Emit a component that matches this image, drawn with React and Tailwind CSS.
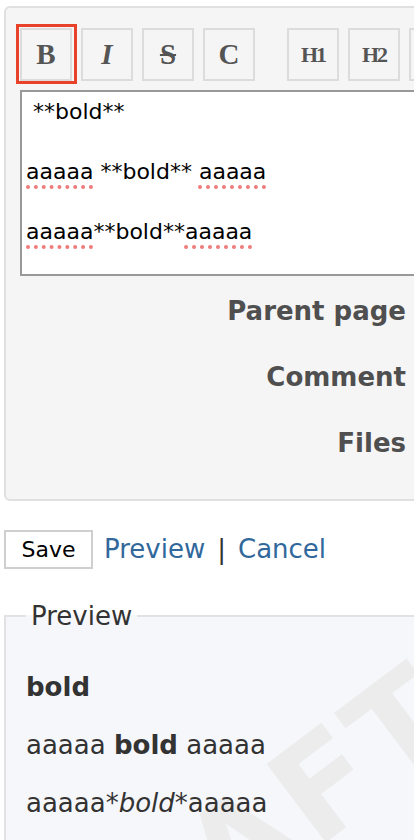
import React from "react";

const Sq = ({ children }) => (
  <span className="underline decoration-dotted decoration-[#ef7b7b] decoration-[4px] underline-offset-[6px]">
    {children}
  </span>
);

const TB = ({ children, className = "" }) => (
  <div
    className={
      "w-[52px] h-[53px] shrink-0 border-2 border-[#dcdcdc] bg-[#f5f5f5] flex items-center justify-center text-[#555] font-['Liberation_Serif',serif] font-bold " +
      className
    }
  >
    {children}
  </div>
);

export default function App() {
  return (
    <div className="relative w-[414px] h-[840px] overflow-hidden bg-white font-['DejaVu_Sans',sans-serif] text-[#222]">
      {/* editor box */}
      <div className="ml-[4px] mt-[6px] w-[700px] h-[495px] border-2 border-[#e0e0e0] rounded-[6px] bg-[#f5f5f5] pl-[14px] pt-[20px]">
        <div className="flex items-start">
          <div className="relative">
            <TB className="text-[29px]">B</TB>
            <div className="absolute left-[-4px] top-[-4px] w-[61px] h-[60px] border-[3px] border-[#e8432a]" />
          </div>
          <TB className="ml-[9px] italic text-[29px]">I</TB>
          <TB className="ml-[9px] line-through decoration-2 text-[29px]">S</TB>
          <TB className="ml-[9px] text-[29px]">C</TB>
          <TB className="ml-[32px] text-[22px] tracking-[-2px]">H1</TB>
          <TB className="ml-[9px] text-[22px] tracking-[-2px]">H2</TB>
          <TB className="ml-[9px] text-[22px] tracking-[-2px]">H3</TB>
        </div>
        <div className="mt-[9px] w-[600px] h-[186px] border-2 border-[#999] bg-white pl-[4px] pt-[5px] text-[22px] leading-[30px] text-black whitespace-pre">
          <div> **bold**</div>
          <div>&nbsp;</div>
          <div>
            <Sq>aaaaa</Sq> **bold** <Sq>aaaaa</Sq>
          </div>
          <div>&nbsp;</div>
          <div>
            <Sq>aaaaa</Sq>**bold**<Sq>aaaaa</Sq>
          </div>
        </div>
        <div className="w-[386px] mt-[18px] flex flex-col items-end gap-[32px] text-[26px] leading-[34px] font-bold text-[#4f4f4f]">
          <div>Parent page</div>
          <div>Comment</div>
          <div>Files</div>
        </div>
      </div>

      {/* actions */}
      <div className="mt-[29px] ml-[4px] flex items-center">
        <div className="w-[89px] h-[39px] border-2 border-[#cfcfcf] bg-white flex items-center justify-center text-[22px] text-black">
          Save
        </div>
        <span className="ml-[11px] text-[26px] text-[#31689c]">Preview</span>
        <span className="mx-[12px] text-[26px] text-[#333]">|</span>
        <span className="text-[26px] text-[#31689c]">Cancel</span>
      </div>

      {/* preview */}
      <fieldset className="relative mt-[30px] ml-[4px] w-[700px] h-[400px] border-2 border-[#e2e2e2] bg-[#f6f7fb] pl-[20px] pt-[37px] overflow-hidden">
        <legend className="px-[5px] text-[26px] leading-[34px] text-[#333]">Preview</legend>
        <div
          aria-hidden="true"
          className="absolute left-[226px] top-[222px] -translate-x-1/2 -translate-y-1/2 -rotate-[37deg] text-[135px] font-bold leading-none text-[#ececec] select-none tracking-[4px]"
        >
          DRAFT
        </div>
        <div className="relative text-[26px] leading-[34px] text-[#333]">
          <p className="font-bold mb-[24px]">bold</p>
          <p className="mb-[24px]">
            aaaaa <b>bold</b> aaaaa
          </p>
          <p>
            aaaaa*<i>bold</i>*aaaaa
          </p>
        </div>
      </fieldset>
    </div>
  );
}
